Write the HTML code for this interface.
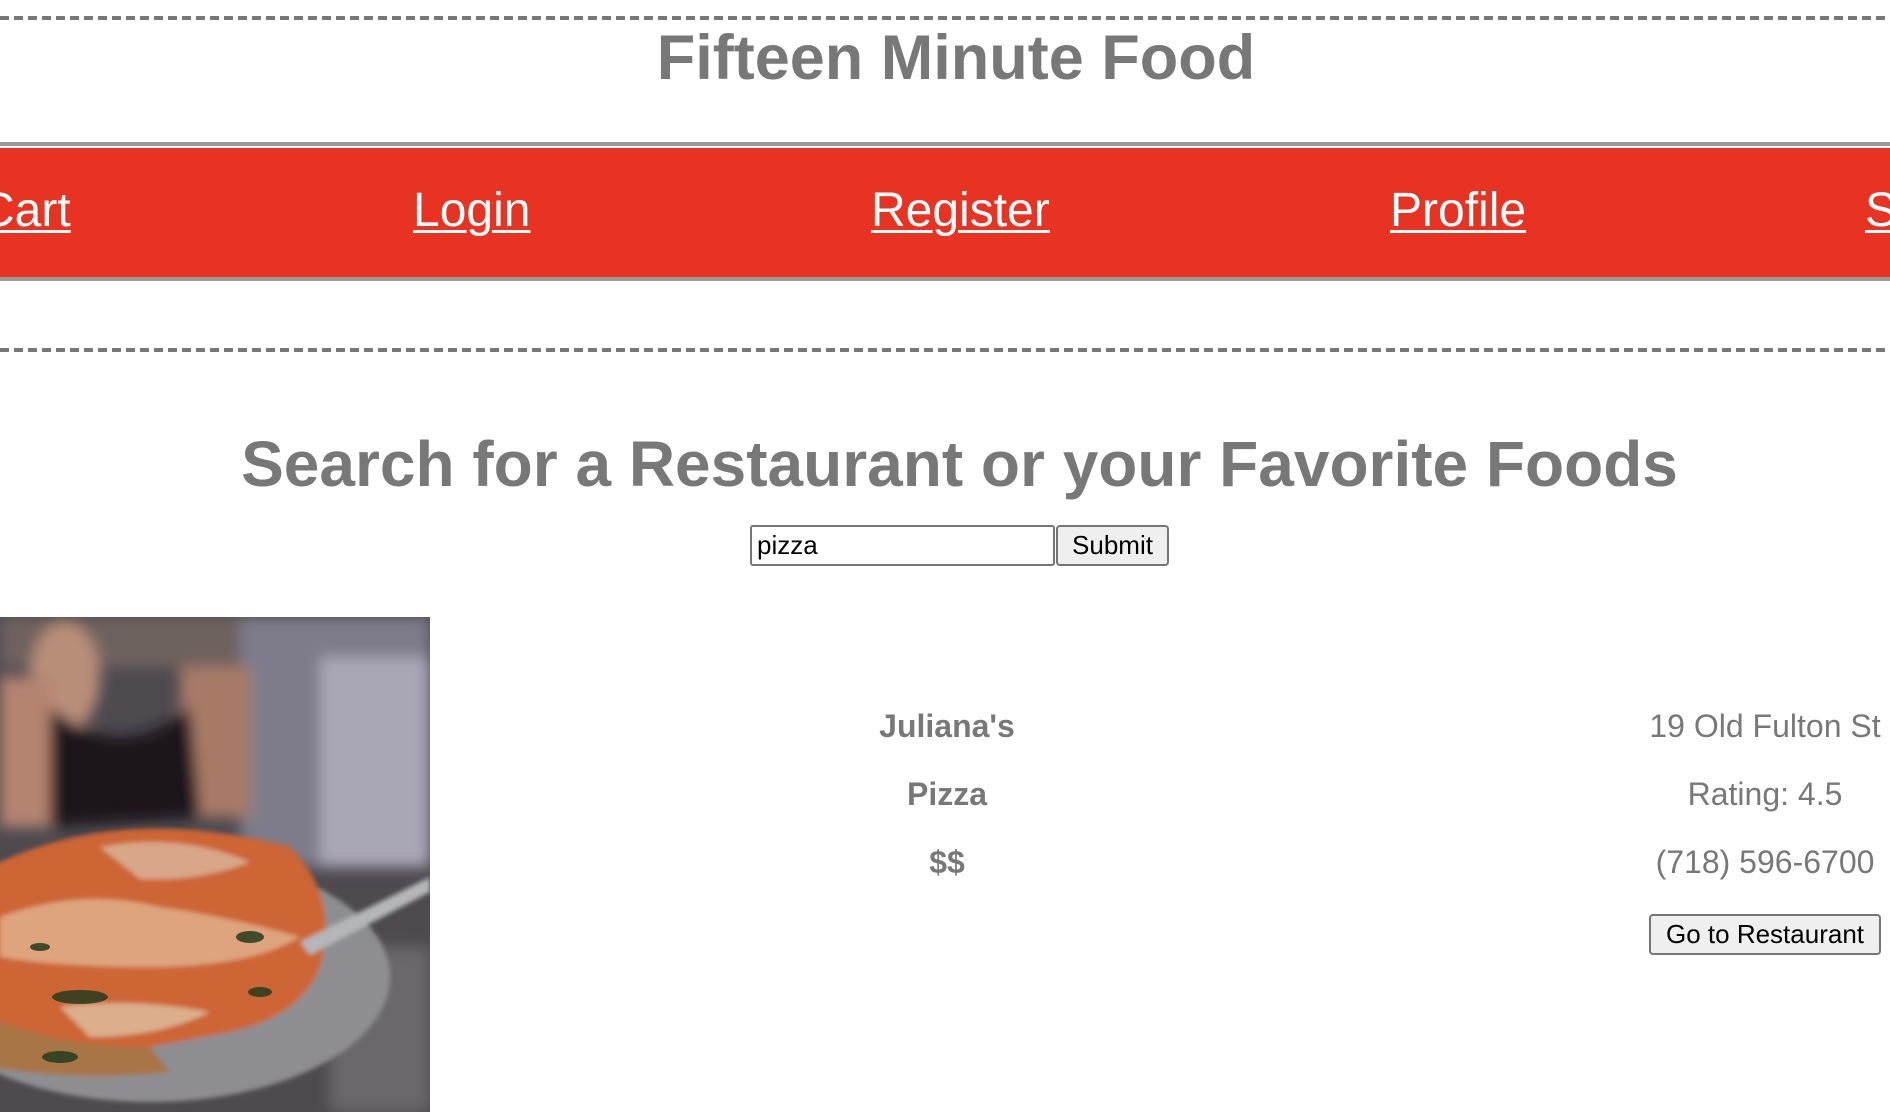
<!DOCTYPE html>
<html><head><meta charset="utf-8"><style>
html,body{margin:0;padding:0;width:1890px;height:1112px;overflow:hidden;background:#fff;font-family:"Liberation Sans",Arial,sans-serif}
#w{position:relative;width:1890px;height:1112px;overflow:hidden}
.dash{position:absolute;left:0;width:1890px;height:4px;background:repeating-linear-gradient(90deg,#777 0 9px,transparent 9px 14px)}
.t{position:absolute;white-space:nowrap;color:#787878}
.bar{position:absolute;left:0;top:142px;width:1890px;height:131px;background:#e83222;border-top:4px solid #9a9a9a;border-bottom:4px solid #9a9a9a}
.bar:before{content:"";position:absolute;left:0;top:0;width:100%;height:2px;background:#fff}
.nav{position:absolute;top:183px;font-size:48px;color:#fff;text-decoration:underline;text-underline-offset:4px;text-decoration-thickness:3px;white-space:nowrap;line-height:56px}
.btn{position:absolute;background:#efefef;border:2px solid #767676;border-radius:4px;box-sizing:border-box;font-size:26px;color:#000;text-align:center}
</style></head><body><div id="w">
<div class="dash" style="top:16px"></div>
<div class="t" style="left:0;width:1912px;text-align:center;top:22px;font-size:63px;font-weight:bold;line-height:72px">Fifteen Minute Food</div>
<div class="bar"></div>
<div class="nav" style="left:-20px">Cart</div>
<div class="nav" style="left:413px">Login</div>
<div class="nav" style="left:871px">Register</div>
<div class="nav" style="left:1390px">Profile</div>
<div class="nav" style="left:1865px">Search</div>
<div class="dash" style="top:348px"></div>
<div class="t" style="left:0;width:1919px;text-align:center;top:427px;font-size:64px;font-weight:bold;line-height:74px">Search for a Restaurant or your Favorite Foods</div>
<div style="position:absolute;left:750px;top:525px;width:305px;height:41px;border:2px solid #767676;border-radius:3px;box-sizing:border-box;font-size:26px;line-height:37px;padding-left:5px;color:#000">pizza</div>
<div class="btn" style="left:1056px;top:525px;width:113px;height:41px;line-height:37px">Submit</div>
<svg style="position:absolute;left:0;top:617px" width="430" height="495" viewBox="0 0 430 495">
<defs><filter id="b"><feGaussianBlur stdDeviation="7"/></filter><filter id="b2"><feGaussianBlur stdDeviation="2.5"/></filter></defs>
<rect width="430" height="495" fill="#4e4a50"/>
<g filter="url(#b)">
<rect x="240" y="0" width="190" height="250" fill="#7e7c8a"/>
<rect x="320" y="40" width="110" height="210" fill="#a9a6b6"/>
<rect x="0" y="0" width="240" height="50" fill="#6e625e"/>
<ellipse cx="65" cy="60" rx="35" ry="55" fill="#b88e78"/>
<rect x="0" y="60" width="50" height="150" fill="#b48470"/>
<rect x="180" y="50" width="70" height="150" fill="#a87a66"/>
<path d="M50 90 Q120 150 190 90 L200 200 L50 210 Z" fill="#1a181b"/>
<rect x="330" y="330" width="100" height="165" fill="#6a686c"/>
</g>
<g filter="url(#b2)">
<ellipse cx="150" cy="360" rx="240" ry="125" fill="#8e8e92"/>
<path d="M-10 250 Q120 185 290 230 Q340 280 320 350 Q300 400 230 415 L150 430 Q60 430 -10 410 Z" fill="#cd6534"/>
<path d="M0 300 Q80 270 160 290 Q230 300 300 320 Q250 350 150 350 Q60 350 0 340 Z" fill="#e6bf9c" opacity=".7"/>
<path d="M60 390 Q130 380 210 395 Q160 420 90 420 Z" fill="#e3cdb0" opacity=".7"/>
<path d="M-10 400 Q60 430 150 430 L170 455 Q80 465 -10 450 Z" fill="#a87446"/>
<path d="M100 230 Q180 215 250 245 Q200 265 140 262 Z" fill="#e0d2c2" opacity=".6"/>
<path d="M300 325 L430 260 L430 275 L310 338 Z" fill="#b4b6b9"/>
</g>
<g fill="#263c1e" opacity=".85"><ellipse cx="80" cy="380" rx="28" ry="7"/><ellipse cx="250" cy="320" rx="14" ry="6"/><ellipse cx="60" cy="440" rx="18" ry="6"/><ellipse cx="260" cy="375" rx="12" ry="5"/><ellipse cx="40" cy="330" rx="10" ry="4"/></g>
</svg>
<div class="t" style="left:847px;width:200px;text-align:center;top:707px;font-size:32px;font-weight:bold;line-height:38px">Juliana's</div>
<div class="t" style="left:847px;width:200px;text-align:center;top:775px;font-size:32px;font-weight:bold;line-height:38px">Pizza</div>
<div class="t" style="left:847px;width:200px;text-align:center;top:843px;font-size:32px;font-weight:bold;line-height:38px">$$</div>
<div class="t" style="left:1615px;width:300px;text-align:center;top:707px;font-size:32px;line-height:38px">19 Old Fulton St</div>
<div class="t" style="left:1615px;width:300px;text-align:center;top:775px;font-size:32px;line-height:38px">Rating: 4.5</div>
<div class="t" style="left:1615px;width:300px;text-align:center;top:843px;font-size:32px;line-height:38px">(718) 596-6700</div>
<div class="btn" style="left:1649px;top:914px;width:232px;height:41px;line-height:37px">Go to Restaurant</div>
</div></body></html>
